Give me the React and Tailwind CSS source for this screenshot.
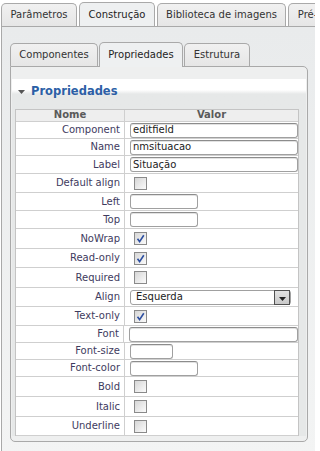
import React from "react";

const rows = [
  { label: "Component", type: "input", value: "editfield", w: "w-[168px]", h: "h-[17px]" },
  { label: "Name", type: "input", value: "nmsituacao", w: "w-[168px]", h: "h-[17px]" },
  { label: "Label", type: "input", value: "Situação", w: "w-[168px]", h: "h-[18px]" },
  { label: "Default align", type: "check", checked: false, h: "h-[19px]" },
  { label: "Left", type: "input", value: "", w: "w-[68px]", h: "h-[18px]" },
  { label: "Top", type: "input", value: "", w: "w-[68px]", h: "h-[18px]" },
  { label: "NoWrap", type: "check", checked: true, h: "h-[20px]" },
  { label: "Read-only", type: "check", checked: true, h: "h-[19px]" },
  { label: "Required", type: "check", checked: false, h: "h-[20px]" },
  { label: "Align", type: "select", value: "Esquerda", h: "h-[19px]" },
  { label: "Text-only", type: "check", checked: true, h: "h-[19px]" },
  { label: "Font", type: "input", value: "", w: "w-[169px]", h: "h-[17px]" },
  { label: "Font-size", type: "input", value: "", w: "w-[43px]", h: "h-[17px]" },
  { label: "Font-color", type: "input", value: "", w: "w-[68px]", h: "h-[17px]" },
  { label: "Bold", type: "check", checked: false, h: "h-[20px]" },
  { label: "Italic", type: "check", checked: false, h: "h-[20px]" },
  { label: "Underline", type: "check", checked: false, h: "h-[19px]" },
];

function Tab({ label, active, w }) {
  return (
    <div
      className={
        active
          ? `relative z-10 mb-[-1px] flex h-[25px] ${w} shrink-0 items-center justify-center overflow-hidden rounded-t-[5px] border border-b-0 border-[#a9a9a9] bg-[#eef0f1] text-[#1e1e1e]`
          : `flex h-[23px] ${w} shrink-0 items-center justify-center overflow-hidden rounded-t-[5px] border border-b-0 border-[#a9a9a9] bg-gradient-to-b from-[#f1f1f1] to-[#e6e6e6] text-[#333]`
      }
    >
      <span className="whitespace-nowrap leading-none">{label}</span>
    </div>
  );
}

function Checkbox({ checked }) {
  return (
    <div className="ml-[9px] h-[13px] w-[13px] border border-[#8a8a8a] bg-gradient-to-br from-[#d6d6d6] to-[#fbfbfb]">
      {checked && (
        <svg viewBox="0 0 11 11" className="h-[11px] w-[11px]">
          <path d="M2.5 5.8 L4.6 8.6 L8.8 2.2" fill="none" stroke="#2c4ea0" strokeWidth="1.6" />
        </svg>
      )}
    </div>
  );
}

function Field({ row }) {
  if (row.type === "check") return <Checkbox checked={row.checked} />;
  if (row.type === "select") {
    return (
      <div className="relative ml-[5px] flex h-[15px] w-[161px] items-center rounded-[3px] border border-[#a0a0a0] bg-white pl-[5px] text-[#222]">
        <span className="leading-none">{row.value}</span>
        <div className="absolute right-[0px] top-[-1px] flex h-[15px] w-[16px] items-end justify-center border border-[#505050] bg-gradient-to-b from-[#e2e2e2] to-[#c9c9c9] pb-[3px]">
          <svg viewBox="0 0 7 4" className="h-[4px] w-[7px]">
            <path d="M0 0 H7 L3.5 4 Z" fill="#222" />
          </svg>
        </div>
      </div>
    );
  }
  return (
    <div
      className={`ml-[5px] flex h-[15px] ${row.w} items-center rounded-[3px] border border-[#a0a0a0] border-t-[#8c8c8c] bg-white pl-[2px] text-[#222] shadow-[inset_0_1px_0_#e2e2e2]`}
    >
      <span className="leading-none">{row.value}</span>
    </div>
  );
}

export default function App() {
  return (
    <div className="h-[451px] w-[315px] overflow-hidden bg-white font-['DejaVu_Sans',Verdana,sans-serif] text-[10px]">
      <div className="ml-[1px] flex h-[26px] items-end gap-[2px] overflow-hidden">
        <Tab label="Parâmetros" w="w-[76px]" />
        <Tab label="Construção" w="w-[76px]" active />
        <Tab label="Biblioteca de imagens" w="w-[129px]" />
        <Tab label="Pré-visualização" w="w-[100px]" />
      </div>

      <div className="ml-[1px] h-[430px] border-l border-t border-[#a9a9a9] bg-gradient-to-b from-[#e9ebec] to-[#f3f4f4] pl-[8px] pt-[15px]">
        <div className="flex h-[24px] items-end gap-[1px]">
          <Tab label="Componentes" w="w-[88px]" />
          <Tab label="Propriedades" w="w-[84px]" active />
          <Tab label="Estrutura" w="w-[66px]" />
        </div>

        <div className="w-[298px] rounded-b-[5px] rounded-tr-[5px] border border-[#a9a9a9] bg-[#eeefef] px-[1px] pb-[5px] pt-[12px]">
          <div className="flex h-[26px] items-center gap-[6px] bg-gradient-to-b from-white from-[42%] to-[#e6e8e8] to-[58%] pl-[6px]">
            <svg viewBox="0 0 7 4" className="h-[4px] w-[7px]">
              <path d="M0 0 H7 L3.5 4 Z" fill="#555" />
            </svg>
            <span className="text-[11.5px] font-bold leading-none text-[#2c5fa6]">Propriedades</span>
          </div>

          <div className="bg-[#e6e8e8] pl-[3px] pt-[4px]">
            <div className="w-[284px] border border-b-0 border-[#c4c4c4] bg-white">
              <div className="flex h-[12px] border-b border-[#cfcfcf] bg-[#eeeeee] font-bold leading-[10px] text-[#5a5a5a]">
                <div className="w-[109px] border-r border-[#cfcfcf] text-center">Nome</div>
                <div className="flex-1 text-center">Valor</div>
              </div>
              {rows.map((row) => (
                <div key={row.label} className={`flex ${row.h} border-b border-[#cfcfcf]`}>
                  <div className="flex w-[109px] items-center justify-end border-r border-[#cfcfcf] pr-[4px] text-[#3e3b5e]">
                    <span className="leading-none">{row.label}</span>
                  </div>
                  <div className="flex flex-1 items-center">
                    <Field row={row} />
                  </div>
                </div>
              ))}
            </div>
          </div>
        </div>
      </div>
    </div>
  );
}
